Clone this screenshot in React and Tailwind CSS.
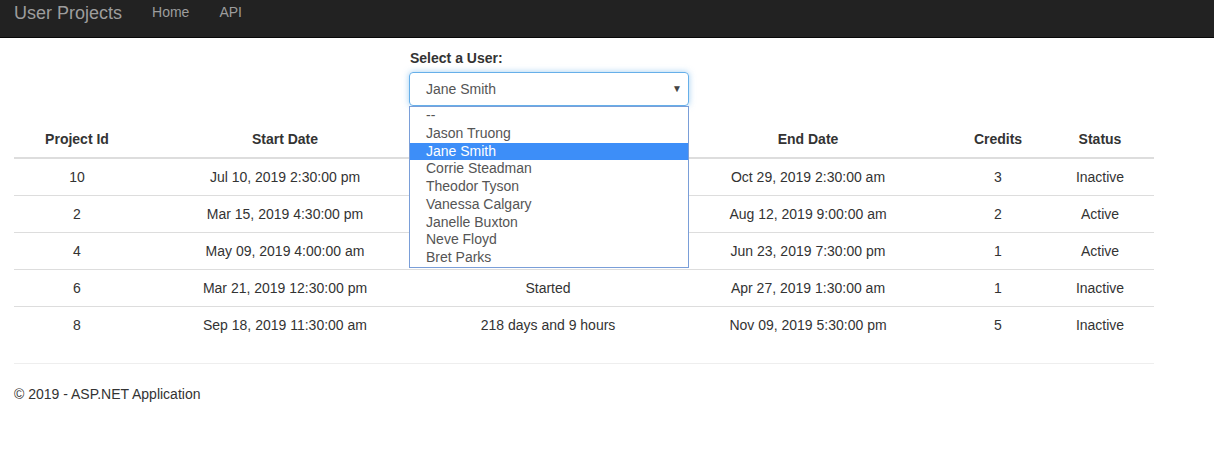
import React from 'react';

const users = ['--', 'Jason Truong', 'Jane Smith', 'Corrie Steadman', 'Theodor Tyson', 'Vanessa Calgary', 'Janelle Buxton', 'Neve Floyd', 'Bret Parks'];

// duration cells of the first rows sit under the open select list
const projects = [
    { id: 10, start: 'Jul 10, 2019 2:30:00 pm', duration: '', end: 'Oct 29, 2019 2:30:00 am', credits: 3, status: 'Inactive' },
    { id: 2, start: 'Mar 15, 2019 4:30:00 pm', duration: '', end: 'Aug 12, 2019 9:00:00 am', credits: 2, status: 'Active' },
    { id: 4, start: 'May 09, 2019 4:00:00 am', duration: '', end: 'Jun 23, 2019 7:30:00 pm', credits: 1, status: 'Active' },
    { id: 6, start: 'Mar 21, 2019 12:30:00 pm', duration: 'Started', end: 'Apr 27, 2019 1:30:00 am', credits: 1, status: 'Inactive' },
    { id: 8, start: 'Sep 18, 2019 11:30:00 am', duration: '218 days and 9 hours', end: 'Nov 09, 2019 5:30:00 pm', credits: 5, status: 'Inactive' },
];

const cols = ['w-[126px]', 'w-[290px]', 'w-[236px]', 'w-[284px]', 'w-[96px]', 'w-[108px]'];

const App = () => {
    return (
        <div className="min-h-[464px] bg-white text-[14px] leading-[20px] text-[#333]" style={{ fontFamily: '"Liberation Sans", Arial, sans-serif' }}>
            {/* Navbar */}
            <div className="h-[38px] bg-[#222] border-b border-[#080808] flex items-start px-[14px]">
                <span className="text-[18px] leading-[24px] text-[#9d9d9d] mt-[1px]">User Projects</span>
                <span className="ml-[30px] text-[#9d9d9d] mt-[2px]">Home</span>
                <span className="ml-[30px] text-[#9d9d9d] mt-[2px]">API</span>
            </div>

            <div className="w-[1140px] ml-[14px]">
                {/* User select */}
                <div className="ml-[395px] mt-[10px] w-[280px] relative">
                    <div className="font-bold leading-[20px] ml-[1px]">Select a User:</div>
                    <div className="mt-[4px] h-[34px] w-[280px] border border-[#66afe9] rounded-[4px] shadow-[0_0_6px_rgba(102,175,233,0.6)] flex items-center justify-between pl-[16px] pr-[6px] text-[#555]">
                        <span>Jane Smith</span>
                        <span className="text-[10px] text-[#444]">▼</span>
                    </div>
                    <div className="absolute left-0 top-[58px] w-[280px] bg-white border border-[#7a9ed8] z-10">
                        {users.map((u) => (
                            <div key={u} className={`h-[17.75px] leading-[17.75px] pl-[16px] ${u === 'Jane Smith' ? 'bg-[#3d8ef8] text-white' : 'text-[#555]'}`}>{u}</div>
                        ))}
                    </div>
                </div>

                {/* Table */}
                <table className="mt-[14px] w-[1140px] border-collapse table-fixed text-center">
                    <thead>
                        <tr className="border-b-2 border-[#ddd]">
                            {['Project Id', 'Start Date', '', 'End Date', 'Credits', 'Status'].map((h, i) => (
                                <th key={i} className={`${cols[i]} h-[38px] font-bold px-2 align-middle`}>{h}</th>
                            ))}
                        </tr>
                    </thead>
                    <tbody>
                        {projects.map((p) => (
                            <tr key={p.id} className="border-b border-[#ddd] last:border-b-0">
                                <td className="h-[37px] px-2">{p.id}</td>
                                <td className="px-2">{p.start}</td>
                                <td className="px-2">{p.duration}</td>
                                <td className="px-2">{p.end}</td>
                                <td className="px-2">{p.credits}</td>
                                <td className="px-2">{p.status}</td>
                            </tr>
                        ))}
                    </tbody>
                </table>

                <hr className="mt-[20px] border-t border-[#eee]" />
                <footer className="mt-[20px]">© 2019 - ASP.NET Application</footer>
            </div>
        </div>
    );
};

export default App;
